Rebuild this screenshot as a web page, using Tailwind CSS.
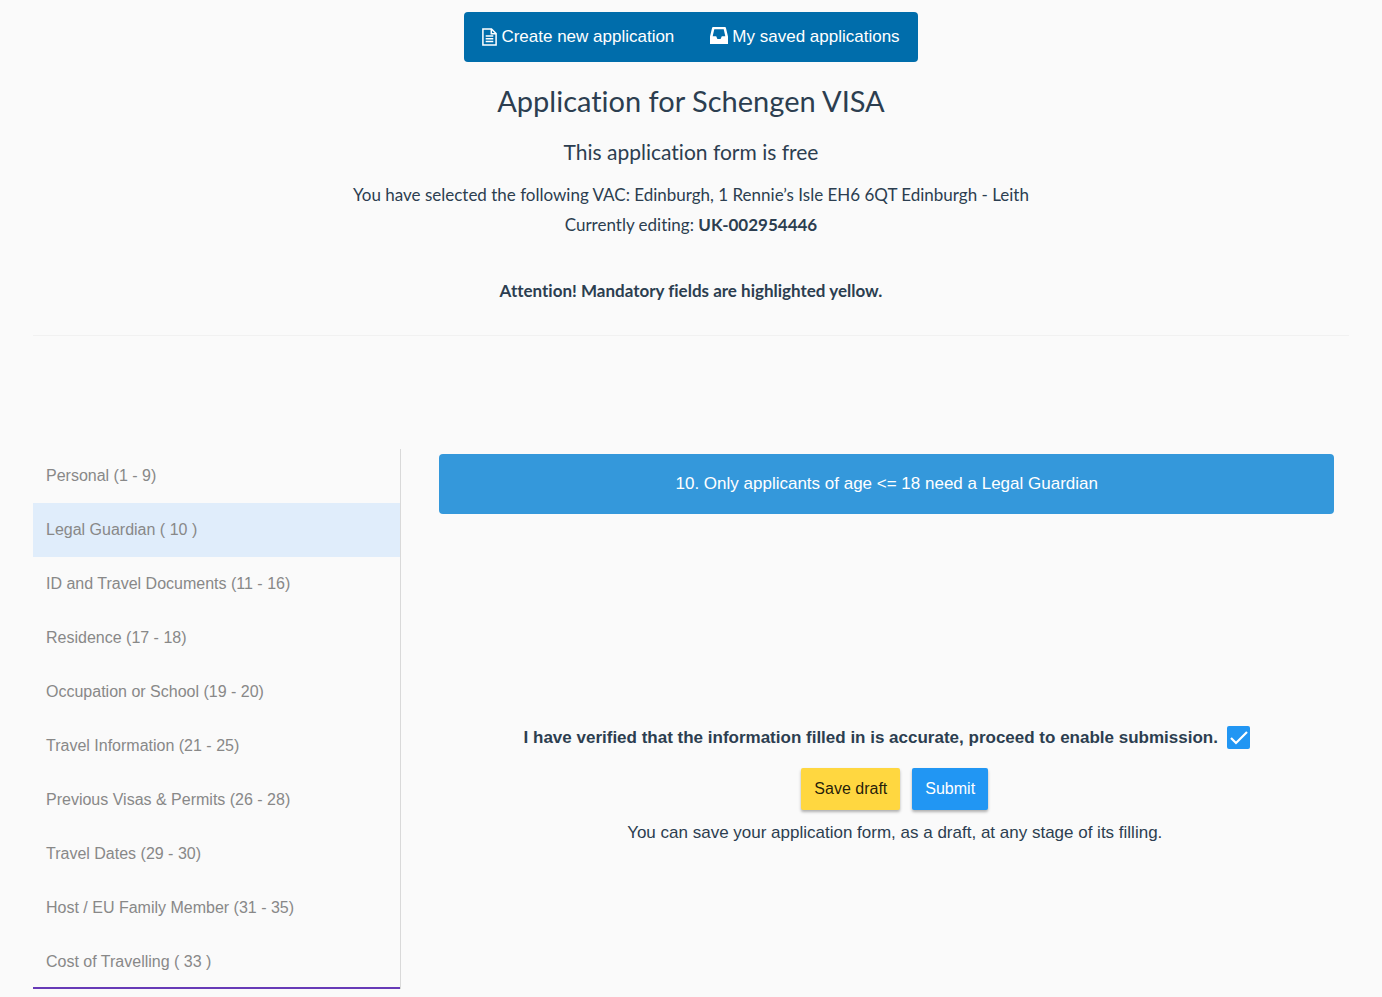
<!DOCTYPE html>
<html lang="en">
<head>
  <meta charset="UTF-8">
  <meta name="viewport" content="width=device-width, initial-scale=1.0">
  <title>Application for Schengen VISA</title>
  <script src="https://cdn.jsdelivr.net/npm/@tailwindcss/browser@4"></script>
</head>
<body class="bg-[#fafafa] px-[33px] pt-3 text-[#2c3e50] font-['Liberation_Sans',Arial,sans-serif]">

  <!-- Header -->
  <header class="flex flex-col items-center text-center font-[Lato,sans-serif] [font-variant-ligatures:no-common-ligatures]">
    <nav class="flex h-[50px] items-center gap-9 rounded bg-[#006dab] px-[18px] text-[17px] text-white font-['Liberation_Sans',Arial,sans-serif]">
      <a href="#" class="flex items-center gap-1">
        <svg class="h-[18px] w-[15px]" viewBox="0 0 15 18" fill="none" stroke="currentColor" stroke-width="1.5">
          <path d="M.9.9h8.600l4.600 4.600v11.600H.9z M9.300.9v4.800h4.800" />
          <path d="M3.700 8h7.600 M3.700 10.800h7.600 M3.700 13.600h7.600" />
        </svg>
        Create new application
      </a>
      <a href="#" class="flex items-center gap-1">
        <svg class="mb-1 h-[17px] w-[18px]" viewBox="0 0 18 17" fill="currentColor" fill-rule="evenodd">
          <path d="M3 0h12q.7 0 .9.7L18 9.500V17H0V9.500L2.100.7Q2.300 0 3 0z M4.300 2.200 2.700 9.300h3.500l1.200 2.600h3.200l1.200-2.600h3.500L13.700 2.200z" />
        </svg>
        My saved applications
      </a>
    </nav>
    <h1 class="mt-[19px] text-[29px] leading-10">Application for Schengen VISA</h1>
    <h2 class="mt-[15px] text-[21px] leading-8">This application form is free</h2>
    <p class="mt-3 text-[17px] leading-[30px]">
      You have selected the following VAC: Edinburgh, 1 Rennie’s Isle EH6 6QT Edinburgh - Leith<br>
      Currently editing: <b>UK-002954446</b>
    </p>
    <p class="mt-9 text-[17px] leading-[30px] font-bold">Attention! Mandatory fields are highlighted yellow.</p>
  </header>

  <hr class="mt-[29px] border-[#f1f1f1]">

  <main class="mt-[113px] flex">
    <!-- Form sections -->
    <nav class="w-[28%] shrink-0 border-r border-[#d9d9d9] text-[16px] text-[#888888]">
      <a href="#" class="flex h-[54px] items-center px-[13px]">Personal (1 - 9)</a>
      <a href="#" class="flex h-[54px] items-center bg-[#e0edfb] px-[13px]">Legal Guardian ( 10 )</a>
      <a href="#" class="flex h-[54px] items-center px-[13px]">ID and Travel Documents (11 - 16)</a>
      <a href="#" class="flex h-[54px] items-center px-[13px]">Residence (17 - 18)</a>
      <a href="#" class="flex h-[54px] items-center px-[13px]">Occupation or School (19 - 20)</a>
      <a href="#" class="flex h-[54px] items-center px-[13px]">Travel Information (21 - 25)</a>
      <a href="#" class="flex h-[54px] items-center px-[13px]">Previous Visas &amp; Permits (26 - 28)</a>
      <a href="#" class="flex h-[54px] items-center px-[13px]">Travel Dates (29 - 30)</a>
      <a href="#" class="flex h-[54px] items-center px-[13px]">Host / EU Family Member (31 - 35)</a>
      <a href="#" class="flex h-[54px] items-center px-[13px] shadow-[inset_0_-2px_#673ab7]">Cost of Travelling ( 33 )</a>
    </nav>

    <!-- Section content -->
    <section class="mr-[15px] ml-[38px] flex flex-1 flex-col pt-[5px] text-[17px]">
      <div class="flex h-[60px] items-center justify-center rounded bg-[#3498db] text-white">10. Only applicants of age &lt;= 18 need a Legal Guardian</div>

      <form class="mt-[211px]">
        <div class="flex items-center justify-center gap-[9px]">
          <label for="verified" class="font-bold">I have verified that the information filled in is accurate, proceed to enable submission.</label>
          <span class="relative flex">
            <input type="checkbox" id="verified" checked class="h-[23px] w-[23px] appearance-none rounded-[2px] bg-[#2196f3]">
            <svg class="pointer-events-none absolute inset-0" viewBox="0 0 23 23" fill="none" stroke="#fff" stroke-width="2.2">
              <path d="M4 12l5 5L20 6" />
            </svg>
          </span>
        </div>
        <div class="mt-[17px] flex flex-col items-center pl-4">
          <div class="flex gap-3">
            <button type="button" class="h-[42px] rounded-[2px] bg-[#ffd740] px-[13px] text-[16px] text-black/87 shadow-[0_2px_3px_rgba(0,0,0,0.3)]">Save draft</button>
            <button type="submit" class="h-[42px] rounded-[2px] bg-[#2196f3] px-[13px] text-[16px] text-white shadow-[0_2px_3px_rgba(0,0,0,0.3)]">Submit</button>
          </div>
          <p class="mt-2 leading-[30px]">You can save your application form, as a draft, at any stage of its filling.</p>
        </div>
      </form>
    </section>
  </main>

</body>
</html>
